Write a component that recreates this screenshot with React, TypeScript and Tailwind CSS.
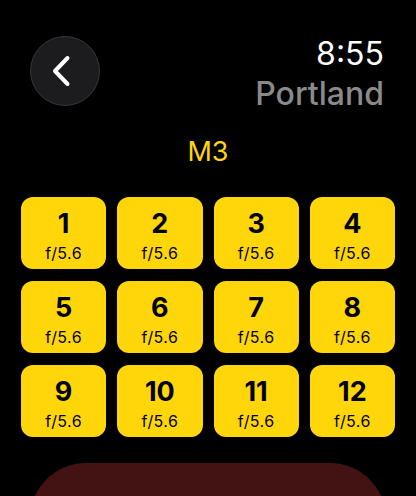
const stops = Array.from({ length: 12 }, (_, i) => ({ id: i + 1, aperture: "f/5.6" }));

function BackButton() {
  return (
    <button className="flex h-[70px] w-[70px] items-center justify-center rounded-full border-[1.5px] border-[#38383a] bg-[#1c1c1e]">
      <svg width="26" height="34" viewBox="0 0 26 34" fill="none" className="-ml-[4px]">
        <path
          d="M17.5 4 L5 17 L17.5 30"
          stroke="white"
          strokeWidth="4"
          strokeLinecap="round"
          strokeLinejoin="round"
        />
      </svg>
    </button>
  );
}

export default function App() {
  return (
    <div
      className="h-[496px] w-[416px] overflow-hidden bg-black"
      style={{ fontFamily: "Inter, 'Noto Sans', sans-serif" }}
    >
      <header className="flex items-start justify-between pl-[30px] pr-[32px] pt-[36px]">
        <BackButton />
        <div className="flex flex-col items-end">
          <span className="mt-[-2px] text-[32px] leading-[40px] text-white">8:55</span>
          <span className="text-[32px] font-medium leading-[40px] text-[#8a8a8a]">Portland</span>
        </div>
      </header>

      <h1 className="mt-[23px] text-center text-[27px] leading-[30px] text-[#ffd60a]">M3</h1>

      <div className="mt-[30px] grid grid-cols-4 gap-x-[11px] gap-y-[12px] px-[21px]">
        {stops.map((s) => (
          <div
            key={s.id}
            className="flex h-[72px] flex-col items-center rounded-[12px] bg-[#ffd60a] text-black"
          >
            <span className="mt-[11px] text-[27px] font-bold leading-[32px]">{s.id}</span>
            <span className="mt-[4px] text-[16px] leading-[18px] tracking-[0.4px]">{s.aperture}</span>
          </div>
        ))}
      </div>

      <div className="mx-[30px] mt-[26px] h-[120px] rounded-t-[56px] bg-[#431213]" />
    </div>
  );
}
